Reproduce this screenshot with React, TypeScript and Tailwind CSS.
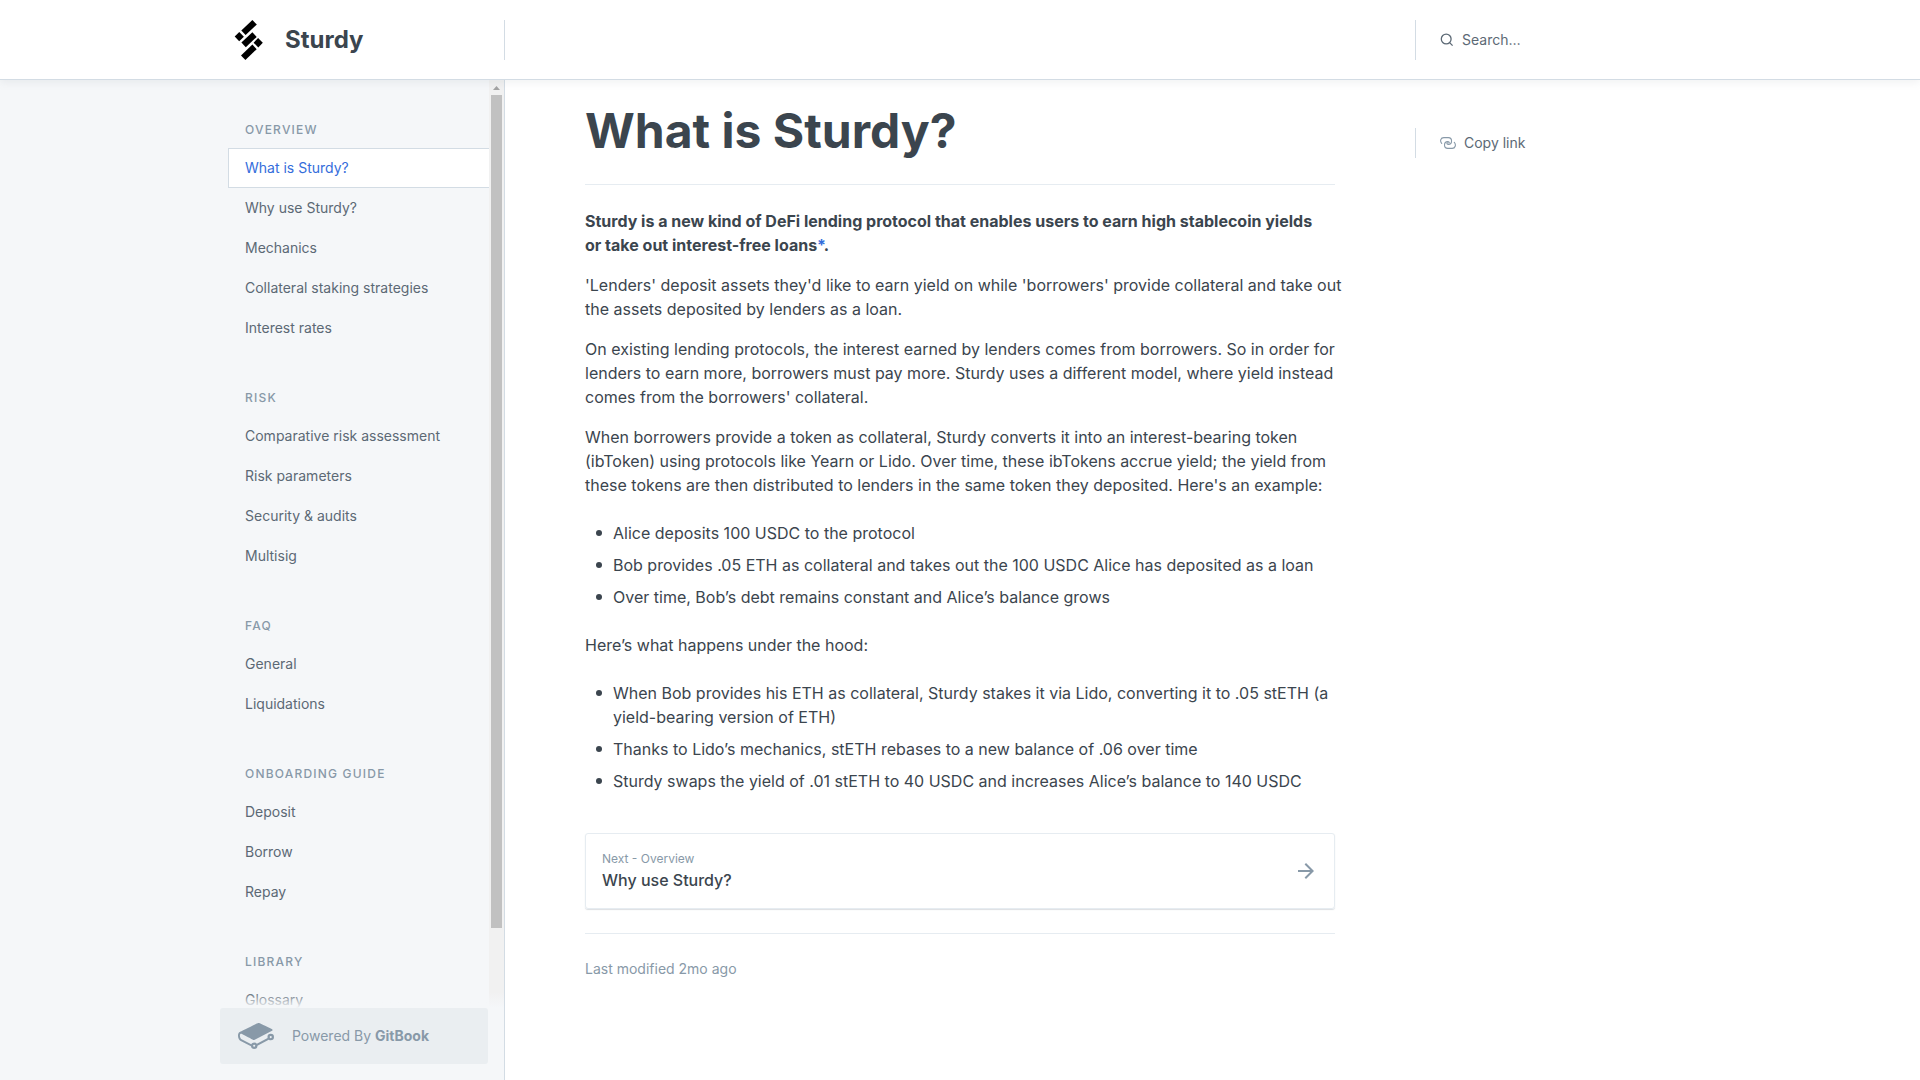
import React from "react";

type Section = { title: string; items: string[] };

const sections: Section[] = [
  {
    title: "Overview",
    items: ["What is Sturdy?", "Why use Sturdy?", "Mechanics", "Collateral staking strategies", "Interest rates"],
  },
  { title: "Risk", items: ["Comparative risk assessment", "Risk parameters", "Security & audits", "Multisig"] },
  { title: "FAQ", items: ["General", "Liquidations"] },
  { title: "Onboarding guide", items: ["Deposit", "Borrow", "Repay"] },
  { title: "Library", items: ["Glossary"] },
];

const activeItem = "What is Sturdy?";

function SturdyLogo() {
  return (
    <svg viewBox="0 0 40 40" className="size-10" fill="#000" aria-hidden="true">
      <path d="M22.4 0 L26.8 4.5 L15.6 15.1 L11.3 10.6 Z" />
      <path d="M9.3 11.9 L13.9 16.8 L9.2 21.2 L4.7 16.5 Z" />
      <path d="M22.4 12.2 L26.7 16.9 L15.8 27.3 L11.4 22.6 Z" />
      <path d="M28.1 18.1 L32.8 22.8 L28.3 27.6 L23.6 22.7 Z" />
      <path d="M22.4 24.6 L26.7 29.2 L15.4 40 L11 35.4 Z" />
    </svg>
  );
}

function SearchIcon() {
  return (
    <svg viewBox="0 0 14 14" className="size-3.5 shrink-0" fill="none" stroke="#5c6975" strokeWidth="1.3" aria-hidden="true">
      <circle cx="6.2" cy="6" r="4.9" />
      <path d="M9.6 9.6 L12.6 12.6" />
    </svg>
  );
}

function LinkIcon() {
  return (
    <svg
      viewBox="0 0 16 12"
      className="h-3 w-4 shrink-0"
      fill="none"
      stroke="#8899a8"
      strokeWidth="1.1"
      strokeLinecap="round"
      aria-hidden="true"
    >
      <path d="M1.7 6.4 C-0.3 4.2 0.6 0.6 3.8 0.6 H8.4 C12.6 0.7 12.6 7.3 8.4 7.4 C7.2 7.4 6.6 6.6 7.2 5.8" />
      <path d="M14.3 5.4 C16.3 7.6 15.4 11.4 12.2 11.4 H7.8 C3.4 11.3 3.4 4.8 7.8 4.6 C9 4.6 9.6 5.3 9 6.1" />
    </svg>
  );
}

function GitBookLogo() {
  return (
    <svg viewBox="0 0 24 24" className="size-9 shrink-0" fill="#8899a8" aria-hidden="true">
      <path d="M10.802 17.77a.703.703 0 11-.002 1.406.703.703 0 01.002-1.406m11.024-4.347a.703.703 0 11.001-1.406.703.703 0 01-.001 1.406m0-2.876a2.176 2.176 0 00-2.174 2.174c0 .233.039.465.115.691l-7.181 3.823a2.165 2.165 0 00-1.784-.937c-.829 0-1.584.475-1.95 1.216l-6.451-3.402c-.682-.358-1.192-1.48-1.138-2.502.028-.533.212-.947.493-1.107.178-.1.392-.092.62.027l.042.023c1.71.9 7.304 3.847 7.54 3.956.363.169.565.237 1.185-.057l11.564-6.014c.17-.064.368-.227.368-.474 0-.342-.354-.477-.355-.477-.658-.315-1.669-.788-2.655-1.25-2.108-.987-4.497-2.105-5.546-2.655-.906-.474-1.635-.074-1.765.006l-.252.125C7.78 6.048 1.46 9.178 1.1 9.397.457 9.789.058 10.57.006 11.539c-.08 1.537.703 3.14 1.824 3.727l6.822 3.518a2.175 2.175 0 002.15 1.862 2.177 2.177 0 002.173-2.14l7.514-4.073c.38.298.853.461 1.337.461A2.176 2.176 0 0024 12.72a2.176 2.176 0 00-2.174-2.174" />
    </svg>
  );
}

function ArrowIcon() {
  return (
    <svg viewBox="0 0 16 16" className="size-4 shrink-0" fill="none" stroke="#8899a8" strokeWidth="2" aria-hidden="true">
      <path d="M0 8 H15" />
      <path d="M7.3 0.7 L14.6 8 L7.3 15.3" />
    </svg>
  );
}

function Header() {
  return (
    <header className="relative z-10 flex h-20 shrink-0 border-b border-[#d3dce4] bg-white shadow-[0_3px_8px_0_rgba(116,129,141,0.1)]">
      <div className="flex w-[calc((100%-1480px)/2+285px)] min-w-72 shrink-0 items-center justify-end">
        <a href="#" className="flex w-[274px] items-center gap-[15px]">
          <SturdyLogo />
          <span className="text-2xl font-bold text-[#3b454e]">Sturdy</span>
        </a>
        <span className="h-10 w-px bg-[#d3dce4]" />
      </div>
      <div className="flex flex-1 items-center">
        <div className="max-w-[910px] flex-1" />
        <label className="flex h-10 w-64 items-center gap-2 border-l border-[#d3dce4] pl-6">
          <SearchIcon />
          <input
            type="search"
            aria-label="Search"
            placeholder="Search…"
            className="w-40 bg-transparent text-sm text-[#5c6975] outline-none placeholder:text-[#5c6975]"
          />
        </label>
      </div>
    </header>
  );
}

function Sidebar() {
  return (
    <aside className="flex w-[calc((100%-1480px)/2+285px)] min-w-72 shrink-0 flex-col items-end border-r border-[#d3dce4] bg-[#f5f7f9] pb-4">
      <div className="relative flex min-h-0 w-[284px] flex-1 overflow-hidden">
        <nav className="min-w-0 flex-1 overflow-hidden pt-10 pl-2">
          {sections.map((section) => (
            <div key={section.title} className="mb-10">
              <h2 className="pb-2 pl-[17px] text-xs leading-5 font-medium tracking-[1.2px] text-[#8899a8] uppercase">
                {section.title}
              </h2>
              <ul>
                {section.items.map((item) => (
                  <li key={item}>
                    <a
                      href="#"
                      className={
                        item === activeItem
                          ? "flex h-10 items-center border border-r-0 border-[#d3dce4] bg-white pl-4 text-sm text-[#346ddb]"
                          : "flex h-10 items-center border border-r-0 border-transparent pl-4 text-sm text-[#5c6975]"
                      }
                    >
                      {item}
                    </a>
                  </li>
                ))}
              </ul>
            </div>
          ))}
        </nav>
        <div className="flex w-[15px] flex-col items-center bg-[#f1f1f1]" aria-hidden="true">
          <svg viewBox="0 0 15 15" className="size-[15px] shrink-0" fill="#a3a3a3">
            <path d="M4 10 L7.5 6 L11 10 Z" />
          </svg>
          <span className="h-[833px] max-h-[91%] w-[11px] bg-[#c1c1c1]" />
        </div>
        <div className="absolute inset-x-0 bottom-0 h-4 bg-linear-to-b from-[#f5f7f9]/0 to-[#f5f7f9]" />
      </div>
      <div className="w-[284px] pr-4">
        <a href="#" className="flex h-14 items-center gap-[18px] rounded-[3px] bg-[#eaeef1] pl-[18px] text-sm text-[#8899a8]">
          <GitBookLogo />
          <span>
            Powered By <strong className="font-bold">GitBook</strong>
          </span>
        </a>
      </div>
    </aside>
  );
}

function Bullets({ items }: { items: string[] }) {
  return (
    <ul className="my-6 flex flex-col gap-2">
      {items.map((item) => (
        <li key={item} className="flex">
          <span className="flex h-6 w-7 shrink-0 items-center justify-center">
            <span className="size-1.5 rounded-full bg-[#3b454e]" />
          </span>
          <span>{item}</span>
        </li>
      ))}
    </ul>
  );
}

function Article() {
  return (
    <main className="max-w-[750px] min-w-0 flex-1 text-base text-[#3b454e]">
      <h1 className="border-b border-[#e6ecf1] pt-5 pb-[22px] text-[48px] leading-[62px] font-bold">What is Sturdy?</h1>
      <div className="mt-6 flex flex-col gap-4">
        <p className="font-bold">
          Sturdy is a new kind of DeFi lending protocol that enables users to earn high stablecoin yields
          <br />
          or take out interest-free loans
          <a href="#" className="text-[#346ddb]">
            *
          </a>
          .
        </p>
        <p className="lg:whitespace-nowrap">
          'Lenders' deposit assets they'd like to earn yield on while 'borrowers' provide collateral and take out
          <br />
          the assets deposited by lenders as a loan.
        </p>
        <p>
          On existing lending protocols, the interest earned by lenders comes from borrowers. So in order for lenders to
          earn more, borrowers must pay more. Sturdy uses a different model, where yield instead comes from the
          borrowers' collateral.
        </p>
        <p>
          When borrowers provide a token as collateral, Sturdy converts it into an interest-bearing token (ibToken)
          using protocols like Yearn or Lido. Over time, these ibTokens accrue yield; the yield from these tokens are
          then distributed to lenders in the same token they deposited. Here's an example:
        </p>
      </div>
      <Bullets
        items={[
          "Alice deposits 100 USDC to the protocol",
          "Bob provides .05 ETH as collateral and takes out the 100 USDC Alice has deposited as a loan",
          "Over time, Bob’s debt remains constant and Alice’s balance grows",
        ]}
      />
      <p>Here’s what happens under the hood:</p>
      <Bullets
        items={[
          "When Bob provides his ETH as collateral, Sturdy stakes it via Lido, converting it to .05 stETH (a yield-bearing version of ETH)",
          "Thanks to Lido’s mechanics, stETH rebases to a new balance of .06 over time",
          "Sturdy swaps the yield of .01 stETH to 40 USDC and increases Alice’s balance to 140 USDC",
        ]}
      />
      <a
        href="#"
        className="mt-10 flex items-center justify-between rounded-[3px] border border-[#e6ecf1] p-4 pr-5 shadow-[0_1px_1px_0_rgba(116,129,141,0.25)]"
      >
        <span className="flex flex-col">
          <span className="text-xs leading-[18px] text-[#8899a8]">Next - Overview</span>
          <span className="font-medium">Why use Sturdy?</span>
        </span>
        <ArrowIcon />
      </a>
      <footer className="mt-6 border-t border-[#e6ecf1] pt-6 text-sm leading-[21px] text-[#8899a8]">
        Last modified 2mo ago
      </footer>
    </main>
  );
}

export default function App() {
  return (
    <div className="flex h-screen flex-col overflow-hidden bg-white font-['Inter',sans-serif]">
      <Header />
      <div className="flex min-h-0 flex-1">
        <Sidebar />
        <div className="flex flex-1 gap-20 pl-20">
          <Article />
          <div className="w-52 shrink-0 pt-12">
            <button
              type="button"
              className="flex h-[30px] items-center gap-2 border-l border-[#d3dce4] pl-6 text-sm text-[#5c6975]"
            >
              <LinkIcon />
              Copy link
            </button>
          </div>
        </div>
      </div>
    </div>
  );
}
